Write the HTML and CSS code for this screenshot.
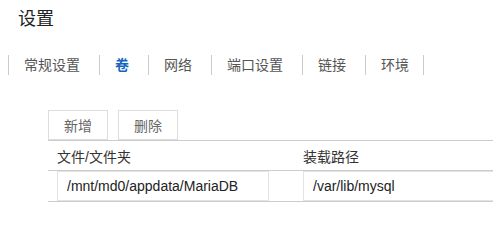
FILE: index.html
```html
<!DOCTYPE html>
<html>

<head>
    <title>设置</title>
    <link rel="stylesheet" href="styles.css">
</head>

<body>
    <h2 class="title">设置</h2>

    <div class="tabs">
        <span class="tab">常规设置</span>
        <span class="tab active">卷</span>
        <span class="tab">网络</span>
        <span class="tab">端口设置</span>
        <span class="tab">链接</span>
        <span class="tab">环境</span>
    </div>

    <div class="panel">
        <div class="toolbar">
            <button class="btn">新增</button>
            <button class="btn">删除</button>
        </div>

        <table class="volumes">
            <thead>
                <tr>
                    <th class="col-folder">文件/文件夹</th>
                    <th>装载路径</th>
                </tr>
            </thead>
            <tbody>
                <tr>
                    <td class="col-folder"><input class="field short" type="text" value="/mnt/md0/appdata/MariaDB"></td>
                    <td class="col-path"><input class="field wide" type="text" value="/var/lib/mysql"></td>
                </tr>
            </tbody>
        </table>
    </div>
</body>

</html>
```

FILE: styles.css
```css
body {
    font-family: "Liberation Sans", "Noto Sans CJK SC", sans-serif;
    margin: 0;
    color: #333;
}

.title {
    margin: 0;
    padding: 8px 0 0 18px;
    font-size: 18px;
    font-weight: normal;
    line-height: 22px;
    color: #222;
}

.tabs {
    display: flex;
    margin-top: 25px;
    padding-left: 8px;
}

.tab {
    height: 20px;
    line-height: 20px;
    padding: 0 19px 0 15px;
    border-left: 1px solid #ccc;
    font-size: 14px;
    color: #555;
}

.tab:last-child {
    padding-right: 14px;
    border-right: 1px solid #ccc;
}

.tab.active {
    color: #1565c0;
    font-weight: bold;
}

.panel {
    margin-top: 35px;
    padding-left: 48px;
}

.toolbar {
    display: flex;
    gap: 10px;
}

.btn {
    height: 30px;
    padding: 0 15px;
    border: 1px solid #ddd;
    background: #fff;
    color: #666;
    font-family: inherit;
    font-size: 14px;
}

.volumes {
    width: 100%;
    border-collapse: collapse;
    font-size: 14px;
}

.volumes th {
    height: 29px;
    padding: 0 9px;
    text-align: left;
    font-weight: normal;
    color: #333;
    border-top: 1px solid #ccc;
    border-bottom: 1px solid #ccc;
}

.volumes td {
    padding: 0 9px;
    border-bottom: 1px solid #ccc;
}

.volumes .col-folder {
    width: 228px;
}

.volumes .col-path {
    padding-right: 0;
}

.field {
    display: block;
    box-sizing: border-box;
    height: 30px;
    padding: 0 9px;
    border: 1px solid #e3e3e3;
    font-family: inherit;
    font-size: 14px;
    color: #222;
    outline: none;
}

.field.short {
    width: 212px;
}

.field.wide {
    width: 100%;
    border-right: none;
}
```
